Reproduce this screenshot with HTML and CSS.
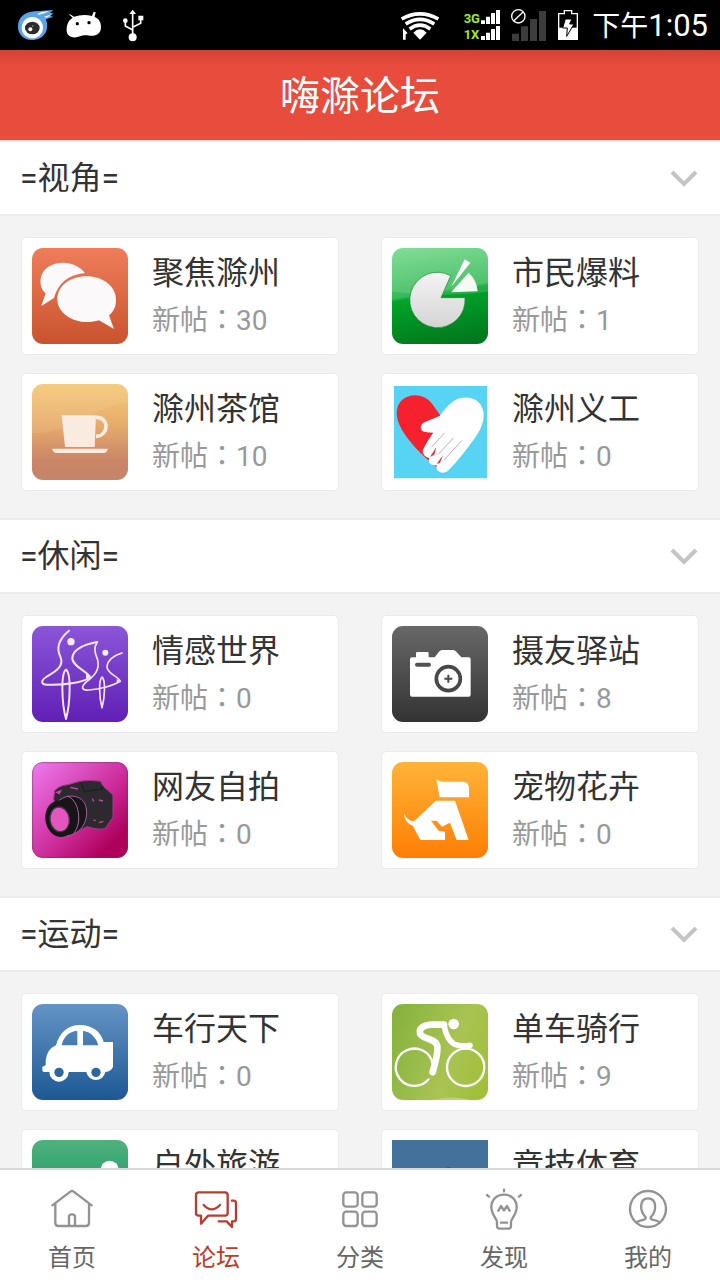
FILE: index.html
```html
<!DOCTYPE html>
<html lang="zh-CN">

<head>
    <meta charset="utf-8">
    <meta name="viewport" content="width=device-width, initial-scale=1">
    <title>嗨滁论坛</title>
    <link rel="stylesheet" href="styles.css">
</head>

<body>
    <div class="status">
        <div class="status-left">
            <svg width="48" height="50" viewBox="36 0 144 150">
                <path d="M54 80C54 50 76 36 104 34C124 33 140 31 160 31L150 39L161 40L149 47L160 50L138 58Q145 78 138 96C128 114 112 120 96 120C70 119 54 102 54 80Z" fill="#5aa3e6" />
                <path d="M111 42Q128 32 147 34Q134 42 118 44ZM132 50L158 42L140 53Z" fill="#e8f5ff" />
                <circle cx="97" cy="83" r="32" fill="#fff" />
                <ellipse cx="97" cy="84" rx="22" ry="19" fill="#2c2c2e" />
                <circle cx="91" cy="88" r="6" fill="#fff" />
                <circle cx="98" cy="78" r="2" fill="#aaa" />
            </svg>
            <svg width="48" height="50" viewBox="180 0 144 150">
                <path d="M218 53L208 44L209 42L222 50Q250 41 276 48L280 37L287 36L284 51C302 58 305 76 302 90C297 104 286 108 270 107C256 106 250 105 240 109C222 116 202 112 200 94C199 76 204 62 218 53Z" fill="#fff" />
                <circle cx="232" cy="71" r="5" />
                <circle cx="267" cy="68" r="5" />
                <path d="M244 86h2M249 93h2M244 99h2M258 94h2" stroke="#bbb" stroke-width="2" />
            </svg>
            <svg width="48" height="50" viewBox="324 0 144 150" fill="none" stroke="#fff" stroke-width="5">
                <path d="M398 36V110M398 90L376 78V64M398 82L422 70V56" />
                <path d="M398 29L408 42H388ZM415 47H430V61H415Z" fill="#fff" stroke="none" />
                <circle cx="376" cy="62" r="7" fill="#fff" stroke="none" />
                <circle cx="398" cy="112" r="12" fill="#fff" stroke="none" />
            </svg>
        </div>
        <div class="status-right">
            <svg width="51" height="50" viewBox="120 0 153 150">
                <g fill="none" stroke="#fff" stroke-width="11">
                    <path d="M125 57Q180 26 235 57" />
                    <path d="M137 72Q180 44 223 72" />
                    <path d="M149 87Q180 64 211 87" />
                </g>
                <path d="M160 98Q180 78 200 98L180 119Z" fill="#fff" />
                <path d="M129 84L143 100L137 103V119H129Z" fill="#fff" />
            </svg>
            <svg width="38" height="50" viewBox="306 0 114 150">
                <text class="network" x="311" y="69">3G</text>
                <text class="network" x="311" y="118">1X</text>
                <path d="M363 61h12v11h-12zM378 50h12v22h-12zM393 39h12v33h-12zM408 30h12v42h-12zM363 108h12v12h-12zM378 98h12v22h-12zM393 87h12v33h-12zM408 78h12v42h-12z" fill="#fff" />
            </svg>
            <svg width="36" height="50" viewBox="453 0 108 150">
                <path d="M456 101h21v22h-21zM483 79h21v44h-21zM510 57h21v66h-21zM537 33h21v90h-21z" fill="#3c3c3c" />
                <g fill="none" stroke="#fff" stroke-width="4">
                    <circle cx="475" cy="49" r="20" />
                    <path d="M461 63L490 35" />
                </g>
            </svg>
            <svg width="20" height="50" viewBox="594 0 60 150">
                <path d="M596 118V41H613V32H635V41H652V118Z" fill="#000" stroke="#fff" stroke-width="4" />
                <path d="M596 83H652V118H596Z" fill="#fff" />
                <path d="M616 57H636L629 72H642L620 109L622 84H608Z" fill="#fff" stroke="#000" stroke-width="3" />
            </svg>
            <time class="time" datetime="13:05"><span class="time-half">下午</span>1:05</time>
        </div>
    </div>

    <header class="header">
        <h1 class="title">嗨滁论坛</h1>
    </header>

    <main class="forums">
        <details class="group" open>
            <summary class="group-head">
                <span class="group-name">=视角=</span>
                <svg class="chevron" width="28" height="20" viewBox="0 0 28 20"><path d="M2 4L14 16L26 4" /></svg>
            </summary>
            <div class="grid">
                <a class="card" href="#">
                    <svg class="tile tile-focus" viewBox="96 324 288 288" fill="#fcf9fa">
                        <path d="M124 498L137 460C113 438 118 398 145 380C180 358 233 368 255 399C205 404 174 430 162 474Z" />
                        <path d="M342 567L297 541C235 560 173 525 172 480C171 438 210 409 260 409C310 409 348 440 348 479C348 502 340 515 327 526Z" />
                    </svg>
                    <span class="info">
                        <span class="name">聚焦滁州</span>
                        <span class="count">新帖<span class="colon" lang="zh-TW">：</span>30</span>
                    </span>
                </a>
                <a class="card" href="#">
                    <svg class="tile tile-news" viewBox="66 54 288 288">
                        <defs>
                            <linearGradient id="pie" x1="0" y1="0" x2="0" y2="1">
                                <stop offset="0" stop-color="#f4f4f4" />
                                <stop offset="1" stop-color="#d4d4d4" />
                            </linearGradient>
                        </defs>
                        <path d="M66 185Q210 205 354 185V54H66Z" fill="#fff" opacity=".13" />
                        <path d="M213 203L242 137A83 83 0 1 0 285 203Z" fill="url(#pie)" stroke="#158a35" stroke-width="2" />
                        <path d="M284 88L301 98L244 170Z" fill="#fff" />
                        <path d="M243 187L296 128Q320 150 323 184Z" fill="#f4fbf5" />
                    </svg>
                    <span class="info">
                        <span class="name">市民爆料</span>
                        <span class="count">新帖<span class="colon" lang="zh-TW">：</span>1</span>
                    </span>
                </a>
                <a class="card" href="#">
                    <svg class="tile tile-tea" viewBox="96 42 288 288">
                        <path d="M96 42H384V96Q310 112 270 136Q180 190 96 190Z" fill="#fff" opacity=".08" />
                        <path d="M185 136H288L284 231H195Z" fill="#f9ebe0" />
                        <path d="M288 142C328 140 328 198 288 199" fill="none" stroke="#f9ebe0" stroke-width="11" />
                        <path d="M157 236H323Q321 249 310 249H170Q159 249 157 236Z" fill="#f9ebe0" />
                    </svg>
                    <span class="info">
                        <span class="name">滁州茶馆</span>
                        <span class="count">新帖<span class="colon" lang="zh-TW">：</span>10</span>
                    </span>
                </a>
                <a class="card" href="#">
                    <svg class="tile tile-care" viewBox="66 462 288 288">
                        <path d="M72 468H351V745H72Z" fill="#57d3f4" />
                        <path d="M220 728C170 690 80 610 80 550C80 490 155 480 185 520L215 562L260 620Z" fill="#f5222d" />
                        <path d="M220 728C208 730 196 718 200 705C184 708 172 698 178 684C162 682 153 665 161 655C170 636 180 622 190 608Q176 608 166 606C148 605 148 582 165 576L210 557Q228 530 248 515C272 496 315 498 332 524C350 550 340 590 315 623Q275 680 237 719Q230 728 220 728Z" fill="#fff" />
                        <g fill="none" stroke="#d7a3bb" stroke-width="3">
                            <path d="M184 652L224 608" />
                            <path d="M204 674L250 624" />
                            <path d="M222 690L275 632" />
                        </g>
                        <path d="M180 681L199 651L193 674ZM200 702L219 675L210 698Z" fill="#ef2b3b" />
                    </svg>
                    <span class="info">
                        <span class="name">滁州义工</span>
                        <span class="count">新帖<span class="colon" lang="zh-TW">：</span>0</span>
                    </span>
                </a>
            </div>
        </details>

        <details class="group" open>
            <summary class="group-head">
                <span class="group-name">=休闲=</span>
                <svg class="chevron" width="28" height="20" viewBox="0 0 28 20"><path d="M2 4L14 16L26 4" /></svg>
            </summary>
            <div class="grid">
                <a class="card" href="#">
                    <svg class="tile tile-emotion" viewBox="66 48 288 288" fill="none" stroke="#f1e4ff" stroke-width="6" stroke-linecap="round" stroke-linejoin="round">
                        <path d="M177 62C145 88 138 112 151 140C164 170 135 185 109 201C92 211 92 224 112 224C160 226 217 218 240 203C244 190 184 170 187 143C190 116 225 103 262 96" />
                        <path d="M262 96C248 116 257 132 263 150C270 180 253 197 230 215C211 231 215 242 236 240C270 238 310 227 331 214C326 200 290 190 291 170C293 150 310 137 336 129" stroke-width="5" />
                        <path d="M168 327C155 280 152 190 168 179C184 190 181 280 168 327Z" />
                        <path d="M276 293C267 260 266 210 276 201C287 210 285 260 276 293Z" stroke-width="5" />
                        <path d="M228 190L242 200L228 206ZM320 207L331 214L320 218Z" fill="#f1e4ff" stroke="none" />
                        <circle cx="183" cy="95" r="11" fill="#f6edff" stroke="none" />
                        <circle cx="286" cy="128" r="9" fill="#f6edff" stroke="none" />
                    </svg>
                    <span class="info">
                        <span class="name">情感世界</span>
                        <span class="count">新帖<span class="colon" lang="zh-TW">：</span>0</span>
                    </span>
                </a>
                <a class="card" href="#">
                    <svg class="tile tile-photo" viewBox="66 48 288 288">
                        <path d="M126 142H138V130Q138 126 142 126H172Q176 126 176 130V142H194L207 125Q211 120 217 120H249Q255 120 259 125L274 142H296Q302 142 302 148V254Q302 260 296 260H126Q120 260 120 254V148Q120 142 126 142Z" fill="#fff" />
                        <path d="M141 164H177" stroke="#525252" stroke-width="12" stroke-linecap="round" />
                        <circle cx="235" cy="206" r="36" fill="none" stroke="#484848" stroke-width="11" />
                        <path d="M235 194V218M223 206H247" stroke="#484848" stroke-width="6" />
                    </svg>
                    <span class="info">
                        <span class="name">摄友驿站</span>
                        <span class="count">新帖<span class="colon" lang="zh-TW">：</span>8</span>
                    </span>
                </a>
                <a class="card" href="#">
                    <svg class="tile tile-selfie" viewBox="66 456 288 288">
                        <path d="M131 568L134 542Q148 526 174 524L209 514Q240 508 272 514L279 528L309 555V622L286 655Q272 662 231 650L180 676Z" fill="#2c2a2e" stroke="#a63792" stroke-width="3" />
                        <path d="M214 516L222 545L275 537L279 528" fill="none" stroke="#232125" stroke-width="5" />
                        <path d="M143 575C170 550 210 554 224 580C239 614 225 660 186 674L155 682Z" fill="#171518" stroke="#b05aa5" stroke-width="3" />
                        <path d="M171 558C207 568 219 640 190 671" fill="none" stroke="#a36b9e" stroke-width="3" />
                        <ellipse cx="150" cy="626" rx="44" ry="55" transform="rotate(-8 150 626)" fill="#171518" />
                        <ellipse cx="149" cy="628" rx="29" ry="37" transform="rotate(-8 149 628)" fill="#e456bd" stroke="#46394a" stroke-width="4" />
                        <path d="M140 547L152 542L148 551ZM181 532L204 537M247 566L251 574M267 570L279 573M267 638L280 634M251 630L257 632" fill="#e05ac0" stroke="#c348a5" stroke-width="4" />
                        <rect x="68" y="458" width="284" height="284" rx="28" fill="none" stroke="#713458" stroke-opacity=".5" stroke-width="3" />
                    </svg>
                    <span class="info">
                        <span class="name">网友自拍</span>
                        <span class="count">新帖<span class="colon" lang="zh-TW">：</span>0</span>
                    </span>
                </a>
                <a class="card" href="#">
                    <svg class="tile tile-pet" viewBox="66 456 288 288" fill="#fff">
                        <path d="M199 507Q208 515 222 515H280Q296 517 297 532V562H209Z" />
                        <path d="M198 572H255L296 690H260L240 638L216 650L200 632H183L206 662L225 665V690H151L129 648Q104 640 102 610Q112 634 132 634Z" />
                    </svg>
                    <span class="info">
                        <span class="name">宠物花卉</span>
                        <span class="count">新帖<span class="colon" lang="zh-TW">：</span>0</span>
                    </span>
                </a>
            </div>
        </details>

        <details class="group" open>
            <summary class="group-head">
                <span class="group-name">=运动=</span>
                <svg class="chevron" width="28" height="20" viewBox="0 0 28 20"><path d="M2 4L14 16L26 4" /></svg>
            </summary>
            <div class="grid">
                <a class="card" href="#">
                    <svg class="tile tile-car" viewBox="66 72 288 288">
                        <path fill-rule="evenodd" d="M97 260L107 256Q105 220 125 203L138 196C148 157 175 135 210 135C246 135 273 155 281 186H309V261Q303 274 286 276A29 29 0 0 1 229 276H176A29 29 0 0 1 118 276H102Q97 276 97 269ZM155 196H202V152Q163 157 155 196ZM219 152V196H265Q254 157 219 152Z" fill="#fff" />
                        <circle cx="147" cy="277" r="14" fill="#2e659e" />
                        <circle cx="258" cy="277" r="14" fill="#2e659e" />
                    </svg>
                    <span class="info">
                        <span class="name">车行天下</span>
                        <span class="count">新帖<span class="colon" lang="zh-TW">：</span>0</span>
                    </span>
                </a>
                <a class="card" href="#">
                    <svg class="tile tile-bike" viewBox="66 72 288 288" fill="none" stroke="#fff" stroke-linecap="round" stroke-linejoin="round">
                        <path d="M176 298A56 56 0 1 1 188 250" stroke-width="7" />
                        <circle cx="287" cy="262" r="56" stroke-width="7" />
                        <path d="M222 134L184 134Q145 138 150 160C156 178 198 174 202 198C205 224 194 250 188 277" stroke-width="20" />
                        <path d="M222 136C226 158 232 180 252 192Q272 201 300 196" stroke-width="17" />
                        <circle cx="251" cy="132" r="16" fill="#fff" stroke="none" />
                        <path d="M186 365Q245 347 305 365" stroke="#c6dc91" stroke-width="8" opacity=".6" />
                    </svg>
                    <span class="info">
                        <span class="name">单车骑行</span>
                        <span class="count">新帖<span class="colon" lang="zh-TW">：</span>9</span>
                    </span>
                </a>
                <a class="card" href="#">
                    <svg class="tile tile-travel" viewBox="66 480 288 288">
                        <circle cx="299" cy="569" r="27" fill="#fff" />
                    </svg>
                    <span class="info">
                        <span class="name">户外旅游</span>
                        <span class="count">新帖<span class="colon" lang="zh-TW">：</span>0</span>
                    </span>
                </a>
                <a class="card" href="#">
                    <svg class="tile tile-sport" viewBox="66 480 288 288">
                        <circle cx="236" cy="574" r="13" fill="#29618e" />
                    </svg>
                    <span class="info">
                        <span class="name">竞技体育</span>
                        <span class="count">新帖<span class="colon" lang="zh-TW">：</span>0</span>
                    </span>
                </a>
            </div>
        </details>
    </main>

    <nav class="tabs">
        <a class="tab" href="#">
            <svg class="tab-icon" viewBox="144 75 144 144">
                <path d="M157 136L211 95Q216 91 221 95L275 136M166 131V189Q166 198 175 198H258Q267 198 267 189V131M207 197V170Q207 163 216 163Q225 163 225 170V197" />
            </svg>
            <span>首页</span>
        </a>
        <a class="tab tab-active" href="#" aria-current="page">
            <svg class="tab-icon" viewBox="576 75 144 144">
                <path d="M596 97H675Q683 97 683 105V159Q683 167 675 167H624L603 191V167H596Q588 167 588 159V105Q588 97 596 97ZM611 135Q635 161 660 135M696 122H701Q708 122 708 129V177Q708 184 701 184H696V201L680 184H656" />
            </svg>
            <span>论坛</span>
        </a>
        <a class="tab" href="#">
            <svg class="tab-icon" viewBox="-72 75 144 144">
                <rect x="-50" y="97" width="43" height="43" rx="9" />
                <rect x="7" y="97" width="43" height="43" rx="9" />
                <rect x="-50" y="155" width="43" height="43" rx="9" />
                <rect x="7" y="155" width="43" height="43" rx="9" />
            </svg>
            <span>分类</span>
        </a>
        <a class="tab" href="#">
            <svg class="tab-icon" viewBox="360 75 144 144">
                <path d="M411 198V186C411 176 394 164 394 141C394 119 410 104 432 104C454 104 470 119 470 141C470 164 453 176 453 186V198Q453 206 445 206H419Q411 206 411 198ZM415 152L423 138L432 151L441 138L449 152M423 188H441M432 89V94M381 105L387 110M483 105L477 110" />
            </svg>
            <span>发现</span>
        </a>
        <a class="tab" href="#">
            <svg class="tab-icon" viewBox="792 75 144 144">
                <circle cx="864" cy="147" r="54" />
                <path d="M828 187Q838 182 852 179Q858 177 857 172C838 153 838 115 864 115C891 115 891 153 872 172Q871 177 877 179Q891 182 900 187" />
            </svg>
            <span>我的</span>
        </a>
    </nav>
</body>

</html>
```
FILE: styles.css
```css
* {
    box-sizing: border-box;
}

body {
    margin: 0;
    height: 100vh;
    display: flex;
    flex-direction: column;
    font-family: Roboto, "Noto Sans CJK SC", sans-serif;
    color: #333;
    background-color: #f3f3f3;
}

a {
    color: inherit;
    text-decoration: none;
}

svg {
    flex: none;
}

/* status bar */
.status {
    flex: none;
    display: flex;
    justify-content: space-between;
    height: 50px;
    padding: 0 12px;
    color: #fff;
    background-color: #000;
}

.status-left,
.status-right {
    display: flex;
}

.status-right {
    gap: 11px;
}

.network {
    font: bold 39px Roboto, sans-serif;
    fill: #a4e82c;
}

.time {
    font-size: 31px;
    line-height: 52px;
    margin-left: 3px;
}

.time-half {
    font-size: 28px;
}

/* header */
.header {
    flex: none;
    padding-top: 4px;
    background: linear-gradient(#d04436, #e74c3c 16px);
}

.title {
    margin: 0;
    font-size: 40px;
    font-weight: normal;
    line-height: 86px;
    text-align: center;
    color: #fff;
}

/* forum list */
.forums {
    flex: 1;
    min-height: 0;
    overflow-y: auto;
    scrollbar-width: none;
}

.group-head {
    display: flex;
    align-items: center;
    justify-content: space-between;
    height: 76px;
    padding: 0 22px 0 20px;
    border-top: 2px solid #ebebeb;
    border-bottom: 2px solid #ebebeb;
    background-color: #fff;
    cursor: pointer;
}

.group:first-child .group-head {
    border-top-color: #ffe1de;
}

.group-name {
    padding-bottom: 6px;
    font-size: 32px;
}

.chevron {
    fill: none;
    stroke: #c4c4c4;
    stroke-width: 4;
}

.grid {
    display: grid;
    grid-template-columns: 1fr 1fr;
    gap: 18px 42px;
    padding: 21px 21px 27px;
}

.card {
    display: flex;
    align-items: center;
    gap: 24px;
    padding: 10px;
    border: 1px solid #ebebeb;
    border-radius: 5px;
    background-color: #fff;
}

.info {
    display: flex;
    flex-direction: column;
}

.name {
    font-size: 32px;
    line-height: 50px;
}

.count {
    font-size: 28px;
    line-height: 46px;
    color: #999;
}

/* the traditional glyph sits in the middle of its box */
.colon {
    font-family: "Noto Sans CJK TC", sans-serif;
    line-height: 1;
}

.tile {
    width: 96px;
    height: 96px;
    border-radius: 11px;
}

.tile-focus {
    background: linear-gradient(#ef7d59, #c9532f);
}

.tile-news {
    background: linear-gradient(170deg, #70d988, #35b957 45%, #00a42b 48%, #00731a);
}

.tile-tea {
    background: linear-gradient(#f5c877, #e9ae6c 40%, #ca8568 80%, #c78468);
}

.tile-care,
.tile-sport {
    border-radius: 0;
}

.tile-emotion {
    background: linear-gradient(#8b56d8, #601fb5);
}

.tile-photo {
    background: linear-gradient(#686868, #333);
}

.tile-selfie {
    background: linear-gradient(135deg, #ee7cf0, #cc2b99 55%, #ae005c 85%);
}

.tile-pet {
    background: linear-gradient(#ffb438, #ff7e05);
}

.tile-car {
    background: linear-gradient(#6594c6, #1d5893);
}

.tile-bike {
    background: linear-gradient(110deg, #82b13c, #a9c353 60%, #9fbf35);
}

.tile-travel {
    background: linear-gradient(#50b17f, #2ea26d 40%);
}

.tile-sport {
    background-color: #42729c;
}

/* bottom tabs */
.tabs {
    flex: none;
    display: flex;
    border-top: 2px solid #d8d8d8;
    background-color: #fff;
}

.tab {
    flex: 1;
    display: flex;
    flex-direction: column;
    align-items: center;
    gap: 4px;
    padding-top: 15px;
    font-size: 24px;
    line-height: 43px;
    color: #666;
}

.tab-active {
    color: #c0392b;
}

.tab-icon {
    width: 48px;
    height: 48px;
    fill: none;
    stroke: #929297;
    stroke-width: 7;
    stroke-linecap: round;
    stroke-linejoin: round;
}

.tab-active .tab-icon {
    stroke: #b93c31;
}
```
